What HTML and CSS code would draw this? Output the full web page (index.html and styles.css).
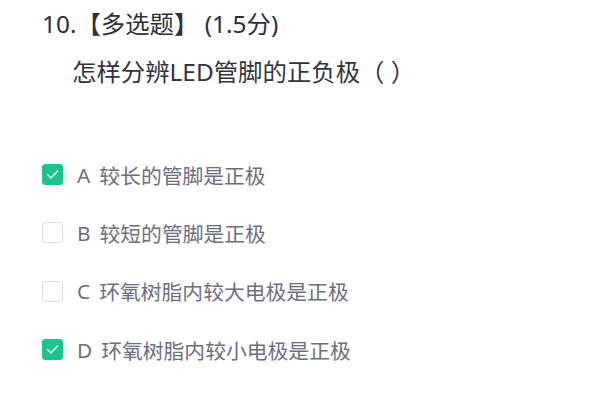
FILE: index.html
```html
<!DOCTYPE html>
<html lang="zh-CN">
<head>
<meta charset="utf-8">
<link rel="stylesheet" href="styles.css">
</head>
<body>
<div class="question">
  <div class="q-title">10.【多选题】 (1.5分)</div>
  <div class="q-stem">怎样分辨LED管脚的正负极（ ）</div>
  <ul class="options">
    <li class="option">
      <span class="box checked"><svg viewBox="0 0 21 21" width="21" height="21"><polyline points="5.5,10.5 9,14 15.5,7" fill="none" stroke="#fff" stroke-width="1.4" stroke-linecap="round" stroke-linejoin="round"/></svg></span>
      <span class="label">A</span><span class="text">较长的管脚是正极</span>
    </li>
    <li class="option">
      <span class="box"></span>
      <span class="label">B</span><span class="text">较短的管脚是正极</span>
    </li>
    <li class="option">
      <span class="box"></span>
      <span class="label">C</span><span class="text">环氧树脂内较大电极是正极</span>
    </li>
    <li class="option">
      <span class="box checked"><svg viewBox="0 0 21 21" width="21" height="21"><polyline points="5.5,10.5 9,14 15.5,7" fill="none" stroke="#fff" stroke-width="1.4" stroke-linecap="round" stroke-linejoin="round"/></svg></span>
      <span class="label">D</span><span class="text">环氧树脂内较小电极是正极</span>
    </li>
  </ul>
</div>
</body>
</html>
```
FILE: styles.css
```css
html, body {
  margin: 0;
  padding: 0;
  background: #fff;
}
body {
  font-family: "Noto Sans", "Noto Sans CJK SC", sans-serif;
}
.question {
  padding: 8px 0 0 42px;
}
.q-title {
  font-size: 24.4px;
  line-height: 32px;
  height: 32px;
  color: #2d2e3e;
  white-space: nowrap;
}
.q-stem {
  margin-top: 16px;
  padding-left: 30px;
  font-size: 24.4px;
  line-height: 32px;
  height: 32px;
  color: #333340;
  white-space: nowrap;
}
.options {
  list-style: none;
  margin: 57.5px 0 0 0;
  padding: 0;
}
.option {
  display: flex;
  align-items: center;
  height: 58.3px;
  font-size: 20.8px;
  color: #6d6e82;
  white-space: nowrap;
}
.box {
  box-sizing: border-box;
  width: 21px;
  height: 21px;
  border: 1px solid #dcdee6;
  border-radius: 3px;
  background: #fff;
  margin-right: 14px;
  flex: none;
  display: flex;
}
.box.checked {
  background: #1bc48f;
  border-color: #1bc48f;
}
.box svg {
  margin: -1px;
}
.label {
  margin-right: 9px;
}
```
